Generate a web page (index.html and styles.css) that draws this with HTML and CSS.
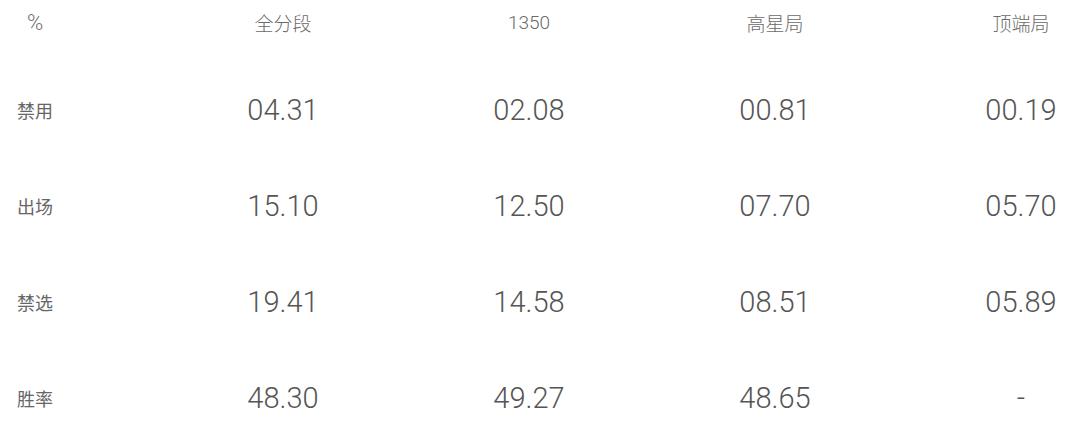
FILE: index.html
```html
<!DOCTYPE html>
<html lang="zh">
<head>
<meta charset="utf-8">
<link rel="stylesheet" href="styles.css">
</head>
<body>
<div class="table">
  <div class="row head">
    <div class="label">%</div>
    <div class="cell">全分段</div>
    <div class="cell">1350</div>
    <div class="cell">高星局</div>
    <div class="cell">顶端局</div>
  </div>
  <div class="row">
    <div class="label">禁用</div>
    <div class="cell">04.31</div>
    <div class="cell">02.08</div>
    <div class="cell">00.81</div>
    <div class="cell">00.19</div>
  </div>
  <div class="row">
    <div class="label">出场</div>
    <div class="cell">15.10</div>
    <div class="cell">12.50</div>
    <div class="cell">07.70</div>
    <div class="cell">05.70</div>
  </div>
  <div class="row">
    <div class="label">禁选</div>
    <div class="cell">19.41</div>
    <div class="cell">14.58</div>
    <div class="cell">08.51</div>
    <div class="cell">05.89</div>
  </div>
  <div class="row last">
    <div class="label">胜率</div>
    <div class="cell">48.30</div>
    <div class="cell">49.27</div>
    <div class="cell">48.65</div>
    <div class="cell">-</div>
  </div>
</div>
</body>
</html>
```

FILE: styles.css
```css
html, body {
  margin: 0;
  padding: 0;
  background: #ffffff;
}
body {
  width: 1080px;
  height: 422px;
  overflow: hidden;
  font-family: "Roboto", "Noto Sans CJK SC", sans-serif;
  color: #555555;
}
.table {
  display: flex;
  flex-direction: column;
}
.row {
  display: grid;
  grid-template-columns: 95px repeat(4, 116px);
  column-gap: 130px;
  align-items: center;
  height: 40px;
  padding: 28px 0;
}
.row.head {
  height: 40px;
  padding: 2px 0 20px;
}
.row.last {
  padding-bottom: 4px;
}
.label {
  padding-left: 17px;
  font-family: "Noto Sans CJK SC", sans-serif;
  font-size: 18px;
  color: #666666;
}
.head .label {
  padding-left: 27px;
  font-family: "Roboto", sans-serif;
  font-weight: 300;
  font-size: 22px;
  color: #707070;
}
.cell {
  text-align: center;
  font-family: "Roboto", "Noto Sans", sans-serif;
  font-weight: 300;
  font-size: 29px;
  color: #555555;
}
.head .cell {
  font-family: "Roboto", "Noto Sans CJK SC", sans-serif;
  font-weight: 300;
  font-size: 19px;
  color: #6a6a6a;
}
```
